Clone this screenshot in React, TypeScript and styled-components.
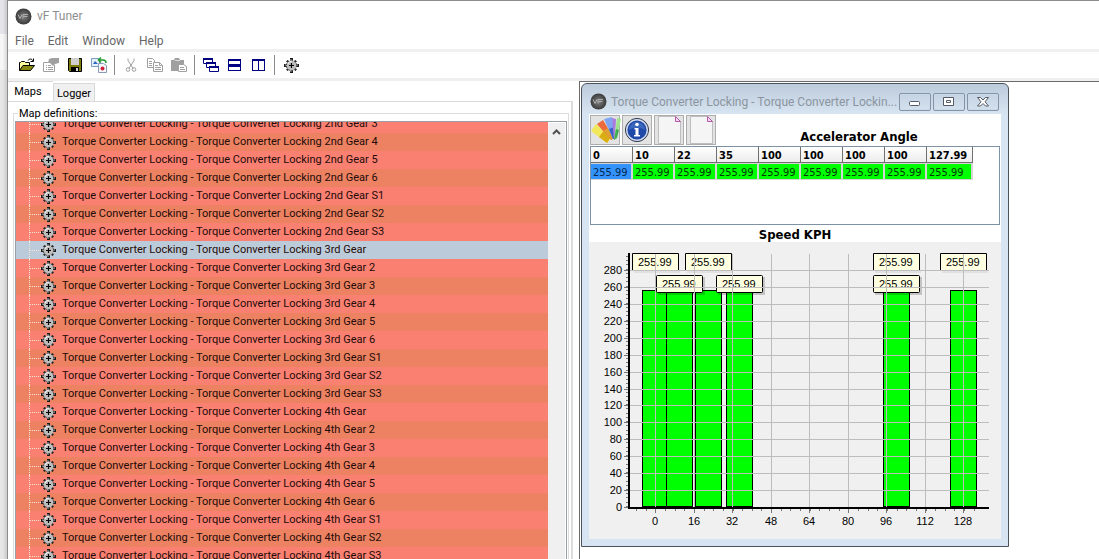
import React from "react";
import styled, { createGlobalStyle } from "styled-components";

const Global = createGlobalStyle`
  * { box-sizing: border-box; }
  body { margin: 0; background: #fff; font-family: Roboto, "Noto Sans", sans-serif; }
  button { font: inherit; color: inherit; padding: 0; margin: 0; border: 0; background: none; }
`;

const grid = `"DejaVu Sans Condensed", "DejaVu Sans", sans-serif`;

const Screen = styled.div`
  display: flex;
  height: 100vh;
  overflow: hidden;
`;
const Backdrop = styled.div`
  flex: none;
  width: 7px;
  background: linear-gradient(90deg, rgba(0, 0, 0, 0) 40%, rgba(0, 0, 0, 0.12)),
    linear-gradient(#e4e4ea 34px, #f6f6f6 34px, #f6f6f6 70px, #e6e6e6 70px);
`;
const AppWindow = styled.main`
  flex: 1;
  min-width: 0;
  display: flex;
  flex-direction: column;
  border-top: 1px solid #8c8c8e;
  border-left: 1px solid #8c8c8e;
  background: #fff;
`;
const TitleBar = styled.header`
  flex: none;
  display: flex;
  align-items: center;
  gap: 5px;
  height: 30px;
  padding-left: 7px;
`;
const AppTitle = styled.h1`
  margin: 0;
  font-size: 12px;
  line-height: 16px;
  font-weight: 400;
  color: #8e8e8e;
`;
const MenuBar = styled.nav`
  flex: none;
  display: flex;
  gap: 14px;
  height: 18px;
  padding: 2px 0 0 7px;
  font-size: 12px;
  line-height: 16px;
  color: #666;
`;
const ToolBar = styled.div`
  flex: none;
  display: flex;
  align-items: center;
  height: 32px;
  padding-left: 7px;
  border-top: 3px solid #f0f0f0;
  border-bottom: 3px solid #f0f0f0;
`;
const ToolButton = styled.button`
  display: grid;
  place-items: center;
  width: 24px;
  height: 24px;
`;
const Divider = styled.span`
  width: 8px;
  height: 20px;
  background: linear-gradient(#8a8a8a, #8a8a8a) 3px 0 / 1px 100% no-repeat;
`;
const Work = styled.div`
  flex: 1;
  min-height: 0;
  display: flex;
`;
const Side = styled.section`
  flex: 0 0 571px;
  display: flex;
  flex-direction: column;
  padding-right: 6px;
`;
const Tabs = styled.div`
  flex: none;
  display: flex;
  align-items: flex-end;
  height: 20px;
  font-size: 11px;
`;
const Tab = styled.button<{ $active?: boolean }>`
  height: ${(p) => (p.$active ? 20 : 18)}px;
  width: ${(p) => (p.$active ? 45 : 42)}px;
  padding: ${(p) => (p.$active ? "0 5px 0 0" : "1px 0 0")};
  text-align: center;
  background: ${(p) => (p.$active ? "#fff" : "#f0f0f0")};
  border: 1px solid #d9d9d9;
  border-bottom: 0;
  border-left-width: ${(p) => (p.$active ? 0 : 1)}px;
  border-right-width: ${(p) => (p.$active ? 0 : 1)}px;
`;
const TabPage = styled.div`
  flex: 1;
  min-height: 0;
  display: flex;
  padding: 4px 2px 0 5px;
  border-top: 1px solid #dcdcdc;
  border-right: 2px solid #dcdcdc;
`;
const Group = styled.fieldset`
  flex: 1;
  min-width: 0;
  margin: 0;
  padding: 0 1px;
  border: 1px solid #dcdcdc;
  border-bottom: 0;
  display: flex;
  flex-direction: column;
`;
const Legend = styled.legend`
  margin-left: 3px;
  padding: 0 1px;
  font-size: 11px;
  line-height: 15px;
`;
const ListBox = styled.div`
  height: 100%;
  display: flex;
  border: 1px solid #9a9fa6;
  border-bottom: 0;
  padding-top: 1px;
  overflow: hidden;
`;
const Tree = styled.ul`
  flex: 1;
  min-width: 0;
  margin: -8px 0 0;
  padding: 0;
  list-style: none;
`;
const Row = styled.li<{ $tone: string }>`
  display: flex;
  align-items: center;
  height: 18px;
  padding-left: 13px;
  background: ${(p) => p.$tone};
  font-size: 11px;
  line-height: 18px;
  color: #240b08;
  white-space: nowrap;
`;
const Branch = styled.span`
  flex: none;
  width: 12px;
  height: 18px;
  border-left: 1px dotted #f6e4da;
  background: repeating-linear-gradient(90deg, #f6e4da 0 1px, transparent 1px 2px) 0 9px / 100% 1px no-repeat;
`;
const RowLabel = styled.span`
  padding-left: 6px;
`;
const ScrollTrack = styled.div`
  flex: none;
  width: 18px;
  border-right: 1px solid #fff;
  background: #f0f0f0;
`;
const ScrollUp = styled.button`
  display: grid;
  place-items: center;
  width: 17px;
  height: 18px;
`;
const Desktop = styled.section`
  flex: 1;
  min-width: 0;
  border-top: 1px solid #6a6a6a;
  border-left: 1px solid #6a6a6a;
  padding: 1px;
`;
const Child = styled.article`
  width: 428px;
  display: flex;
  flex-direction: column;
  padding: 0 7px 7px;
  border: 1px solid #4c525a;
  border-radius: 6px 6px 0 0;
  background: linear-gradient(#bccbdc, #d7e4f1 30px, #d7e4f1);
`;
const ChildBar = styled.header`
  display: flex;
  align-items: center;
  height: 30px;
  padding: 5px 2px 0 1px;
`;
const ChildTitle = styled.h2`
  flex: 1;
  min-width: 0;
  margin: 0;
  padding-left: 4px;
  overflow: hidden;
  white-space: nowrap;
  font-size: 12px;
  line-height: 16px;
  font-weight: 400;
  color: #8b959f;
`;
const Controls = styled.div`
  display: flex;
  gap: 2px;
`;
const ControlButton = styled.button`
  display: grid;
  place-items: center;
  width: 32px;
  height: 18px;
  border: 1px solid #8495a8;
  border-radius: 2px;
  box-shadow: inset 0 0 0 1px #ccd9e6;
`;
const ChildBody = styled.div`
  background: #fff;
`;
const Strip = styled.div`
  display: flex;
  gap: 2px;
  height: 32px;
  padding: 1px 1px 0;
`;
const StripButton = styled.button`
  display: grid;
  place-items: center;
  width: 30px;
  height: 30px;
  background: #e3e3e3;
  border: 1px solid #adadad;
`;
const AxisTitle = styled.h3`
  flex: 1;
  margin: 0;
  text-align: center;
  font: bold 13px/14px ${grid};
`;
const TopTitle = styled(AxisTitle)`
  align-self: flex-end;
  padding-bottom: 2px;
`;
const LowerTitle = styled(AxisTitle)`
  padding-top: 3px;
`;
const TableBox = styled.div`
  height: 79px;
  margin: 0 1px;
  border: 1px solid #7f92a5;
`;
const DataTable = styled.table`
  border-collapse: separate;
  border-spacing: 0;
  table-layout: fixed;
  width: 382px;
  font: 11px/14px ${grid};
  th {
    height: 16px;
    padding: 2px 2px 0;
    text-align: left;
    border-right: 1px solid #707070;
    border-bottom: 1px solid #707070;
    background: linear-gradient(#fff, #ececec);
    line-height: 13px;
  }
`;
const Cell = styled.td<{ $picked?: boolean }>`
  height: 17px;
  padding: 2px 0 0 2px;
  line-height: 13px;
  color: ${(p) => (p.$picked ? "#052a52" : "#043a04")};
  background: ${(p) => (p.$picked ? "#3393fb" : "#00ff00")};
  border: solid #d4d4d4;
  border-width: 1px 2px 1px 0;
`;
const Plot = styled.svg`
  display: block;
  width: 100%;
  background: #f0f0f0;
  font: 11px "Liberation Sans", Arial, sans-serif;
`;

const Badge = () => (
  <svg width="17" height="17" viewBox="0 0 17 17" aria-hidden="true">
    <defs>
      <radialGradient id="ball" cx=".5" cy=".5" r=".5">
        <stop offset="0" stopColor="#858585" />
        <stop offset=".6" stopColor="#565656" />
        <stop offset="1" stopColor="#3a3a3a" />
      </radialGradient>
    </defs>
    <circle cx="8.500" cy="8.500" r="8" fill="url(#ball)" />
    <path d="M3 6.500l2 4 2-4M8 10.500v-4h5M8.500 8.500h4" stroke="#adadad" fill="none" />
  </svg>
);

const Gear = ({ size = 15 }: { size?: number }) => (
  <svg width={size} height={size} viewBox="0 0 15 15" aria-hidden="true">
    <path d="M7.500 0v15M0 7.500h15" stroke="#1a1a1a" strokeWidth="3" />
    <path d="M2.800 2.800l9.400 9.400M12.200 2.800L2.800 12.200" stroke="#1a1a1a" strokeWidth="2" />
    <path d="M7 1v13M1 7h13" stroke="#b8b8b8" />
    <circle cx="7.500" cy="7.500" r="5.200" fill="#bdbdbd" stroke="#2a2a2a" strokeDasharray="1.500 1.800" />
    <path d="M4 6l1.500-2 2.500-1" stroke="#f4f4f4" fill="none" />
    <path d="M7.500 5v5M5 7.500h5" stroke="#000" strokeWidth="1.200" />
  </svg>
);

const Glyph = ({ children }: { children: React.ReactNode }) => (
  <svg width="16" height="16" viewBox="0 0 16 16" fill="none" aria-hidden="true">
    {children}
  </svg>
);

const OpenIcon = () => (
  <Glyph>
    <path d="M.5 13.500v-8h1l1-1h3l1 1h4v3" fill="#ffff9c" stroke="#000" />
    <path d="M.5 13.500l3.500-5h11.500l-4 5z" fill="#8a8a10" stroke="#000" />
    <path d="M9 3.500c1-2 4-2 5 .5M14.500 1.500v3h-3" stroke="#000" />
  </Glyph>
);
const PropsIcon = () => (
  <Glyph>
    <path d="M6 2l3-1h7v5l-4 1-2 2-3-3h-2z" fill="#a0a0a0" />
    <path d="M6 5.500H.5v9h11V8M3 8.500h1M3 10.500h1M3 12.500h1M5 8.500h3M5 10.500h5M5 12.500h5" stroke="#a0a0a0" />
  </Glyph>
);
const SaveIcon = () => (
  <Glyph>
    <path d="M1.500 1.500h13v13h-12l-1-1z" fill="#7d7d0a" stroke="#000" />
    <path d="M4 1h8v7H4z" fill="#d0d0d0" />
    <path d="M4 10h8v5H4z" fill="#000" />
    <path d="M9 11h2v3H9z" fill="#d8d8d8" />
  </Glyph>
);
const TransferIcon = () => (
  <Glyph>
    <path d="M.5 1.500h8v8h-8z" fill="#e6f0fa" stroke="#7b9cc4" />
    <path d="M2 7l2-3 3 3z" fill="#2e67c0" />
    <path d="M7.500 6.500h5l3 2v7h-8z" fill="#f6f7fb" stroke="#8b99b8" />
    <circle cx="11.500" cy="11.500" r="2" fill="#d0203c" />
    <path d="M8 3h4c2 0 3 1 3 3M10 .5L7.500 3 10 5.500" stroke="#1f9a2b" strokeWidth="1.500" />
  </Glyph>
);
const CutIcon = () => (
  <Glyph>
    <path d="M5 1.500v2l5 8M11 1.500v2l-5 8" stroke="#a0a0a0" />
    <circle cx="5" cy="12.500" r="1.800" stroke="#a0a0a0" />
    <circle cx="11" cy="12.500" r="1.800" stroke="#a0a0a0" />
  </Glyph>
);
const CopyIcon = () => (
  <Glyph>
    <path d="M6 10.500H.5v-9h5l2 2V5M2 4.500h3M2 6.500h3M2 8.500h3" stroke="#a0a0a0" />
    <path d="M6.500 5.500h6l3 3v6h-9zM8 8.500h3M8 10.500h6M8 12.500h6M12.500 5.500v3h3" stroke="#a0a0a0" fill="#fff" />
  </Glyph>
);
const PasteIcon = () => (
  <Glyph>
    <path d="M0 3h3l1-2h4l1 2h4v11H0z" fill="#a0a0a0" />
    <path d="M4 3.500h5" stroke="#ddd" />
    <path d="M7.500 7.500h5l3 2v5h-8zM9 10.500h4M9 12.500h5" stroke="#a0a0a0" fill="#fff" />
  </Glyph>
);
const navy = "#000080";
const CascadeIcon = () => (
  <Glyph>
    {[[0, 1], [3, 5], [6, 9]].map(([x, y]) => (
      <g key={x}>
        <path d={`M${x + 0.5} ${y + 0.5}h9v5h-9z`} fill="#fff" stroke={navy} />
        <path d={`M${x} ${y}h10v2h-10z`} fill={navy} />
      </g>
    ))}
  </Glyph>
);
const RowsIcon = () => (
  <Glyph>
    <path d="M1 2h13v12H1z" fill={navy} />
    <path d="M2 4h11v3H2zM2 10h11v3H2z" fill="#fff" />
  </Glyph>
);
const ColsIcon = () => (
  <Glyph>
    <path d="M1 2h13v12H1z" fill={navy} />
    <path d="M2 4h5v9H2zM8 4h5v9H8z" fill="#fff" />
  </Glyph>
);

const PaletteIcon = () => (
  <svg width="30" height="28" viewBox="0 0 30 28" aria-hidden="true">
    <path d="M16 27L0 15l5-7 15 14z" fill="#f2e85c" />
    <path d="M16 27l-8-6 5-7 7 7z" fill="#d9ae13" />
    <path d="M20 24L6 8l6-4 11 18z" fill="#ec6a3c" />
    <path d="M20 24l-8-9 5-3 6 10z" fill="#e0a030" />
    <path d="M22 23L13 3l8-2 3 21z" fill="#7ea6f2" />
    <path d="M22 23l-4-10 5-2 1 12z" fill="#3a62c8" />
    <path d="M23 24L21 2l4 1-1 21z" fill="#a97be0" />
    <path d="M23 24l3-22 4 1-4 18z" fill="#9fe58b" />
    <path d="M23 24l2-11 3 1-2 8z" fill="#3fae52" />
  </svg>
);
const InfoIcon = () => (
  <svg width="26" height="26" viewBox="0 0 26 26" aria-hidden="true">
    <circle cx="13" cy="13" r="11.500" fill="#1e49a8" stroke="#30343c" />
    <circle cx="13" cy="13" r="10.300" fill="none" stroke="#d4dcec" strokeWidth="1.400" />
    <path d="M5 13a8 8 0 0 1 16 0c-5-3-11-3-16 0z" fill="#3a66bd" />
    <circle cx="13" cy="7.500" r="1.800" fill="#fff" />
    <path d="M10.500 11h4v7h1.500v1.500h-6V18h1.500v-5.500h-1z" fill="#fff" />
  </svg>
);
const PageIcon = () => (
  <svg width="26" height="28" viewBox="0 0 26 28" aria-hidden="true">
    <path d="M2.500.5H19l5.500 5.500v21.500h-22z" fill="#f5f5f6" stroke="#bdbdc0" />
    <path d="M19.500.5v5h5z" fill="#f3d8ef" stroke="#b45aa8" />
  </svg>
);

const gears: [string, string][] = [
  ["2nd", "3"], ["2nd", "4"], ["2nd", "5"], ["2nd", "6"], ["2nd", "S1"], ["2nd", "S2"], ["2nd", "S3"],
  ...["3rd", "4th"].flatMap((g) =>
    ["", "2", "3", "4", "5", "6", "S1", "S2", "S3"].map((n): [string, string] => [g, n])
  ),
];
const heads = ["0", "10", "22", "35", "100", "100", "100", "100", "127.99"];

const xs = [66, 105, 143, 182, 220, 259, 297, 336, 374];
const bars = [
  { x: 53, w: 24 }, { x: 77, w: 26 }, { x: 106, w: 26 }, { x: 137, w: 26 }, { x: 294, w: 26 }, { x: 361, w: 26 },
];
const upperTags = [43, 96, 284, 351];
const lowerTags = [67, 127, 284];
const yOf = (v: number) => Math.round(265 - (v * 237) / 280);
const levels = Array.from({ length: 15 }, (_, i) => i * 20);

const Chart = () => (
  <Plot viewBox="0 0 412 297" role="img" aria-label="Bar chart">
    {bars.map((b) => (
      <rect key={b.x} x={b.x + 0.5} y="48.500" width={b.w} height="216" fill="#00ff00" stroke="#000" />
    ))}
    {upperTags.map((x) => (
      <g key={x}>
        <path d={`M${x + 2} 28h46v3h-46z`} fill="#000" opacity=".06" />
        <path d={`M${x} 11h47v17h-47z`} fill="#ffffe1" />
        <path d={`M${x + 0.5} 28v-16.500h46v16.500`} fill="none" stroke="#000" />
        <text x={x + 6} y="24">255.99</text>
      </g>
    ))}
    {lowerTags.map((x) => (
      <g key={x}>
        <rect x={x + 2} y="35" width="47" height="18" fill="#000" opacity=".18" />
        <rect x={x + 0.5} y="33.500" width="46" height="17" rx="1" fill="#ffffe1" stroke="#000" />
        <text x={x + 6} y="46">255.99</text>
      </g>
    ))}
    <g stroke="#bdbdbd" shapeRendering="crispEdges">
      {xs.map((x) => <path key={x} d={`M${x + 0.5} 12V265`} />)}
      {levels.slice(1).map((v) => <path key={v} d={`M41 ${yOf(v) + 0.5}H400`} />)}
    </g>
    <g stroke="#777" shapeRendering="crispEdges">
      {levels.map((v) => <path key={v} d={`M35 ${yOf(v) + 0.5}h4`} />)}
      {Array.from({ length: 60 }, (_, i) => <path key={i} d={`M37 ${14.5 + i * 4.236}h2`} />)}
      {xs.map((x) => <path key={x} d={`M${x + 0.5} 267v4`} />)}
      {Array.from({ length: 36 }, (_, i) => <path key={i} d={`M${47.5 + i * 9.65} 267v2`} />)}
    </g>
    <path d="M40 11V267M39 266H400" stroke="#000" strokeWidth="2" />
    {levels.map((v) => (
      <text key={v} x="33" y={yOf(v) + 4} textAnchor="end">{v}</text>
    ))}
    {xs.map((x, i) => (
      <text key={x} x={x} y="283" textAnchor="middle">{i * 16}</text>
    ))}
  </Plot>
);

export default function App() {
  return (
    <Screen>
      <Global />
      <Backdrop />
      <AppWindow>
        <TitleBar>
          <Badge />
          <AppTitle>vF Tuner</AppTitle>
        </TitleBar>
        <MenuBar>
          {["File", "Edit", "Window", "Help"].map((m) => <button key={m}>{m}</button>)}
        </MenuBar>
        <ToolBar>
          <ToolButton aria-label="Open"><OpenIcon /></ToolButton>
          <ToolButton aria-label="Properties"><PropsIcon /></ToolButton>
          <ToolButton aria-label="Save"><SaveIcon /></ToolButton>
          <ToolButton aria-label="Transfer"><TransferIcon /></ToolButton>
          <Divider />
          <ToolButton aria-label="Cut"><CutIcon /></ToolButton>
          <ToolButton aria-label="Copy"><CopyIcon /></ToolButton>
          <ToolButton aria-label="Paste"><PasteIcon /></ToolButton>
          <Divider />
          <ToolButton aria-label="Cascade"><CascadeIcon /></ToolButton>
          <ToolButton aria-label="Tile rows"><RowsIcon /></ToolButton>
          <ToolButton aria-label="Tile columns"><ColsIcon /></ToolButton>
          <Divider />
          <ToolButton aria-label="Settings"><Gear /></ToolButton>
        </ToolBar>
        <Work>
          <Side>
            <Tabs role="tablist">
              <Tab role="tab" aria-selected $active>Maps</Tab>
              <Tab role="tab" aria-selected={false}>Logger</Tab>
            </Tabs>
            <TabPage>
              <Group>
                <Legend>Map definitions:</Legend>
                <ListBox>
                  <Tree>
                    {gears.map(([g, n], i) => (
                      <Row key={g + n} $tone={g === "3rd" && !n ? "#bccbd9" : i % 2 ? "#ec8262" : "#fa8072"}>
                        <Branch />
                        <Gear />
                        <RowLabel>
                          {`Torque Converter Locking - Torque Converter Locking ${g} Gear ${n}`.trim()}
                        </RowLabel>
                      </Row>
                    ))}
                  </Tree>
                  <ScrollTrack>
                    <ScrollUp aria-label="Scroll up">
                      <svg width="9" height="6" viewBox="0 0 9 6" aria-hidden="true">
                        <path d="M1 5l3.500-3.500L8 5" fill="none" stroke="#505050" strokeWidth="2" />
                      </svg>
                    </ScrollUp>
                  </ScrollTrack>
                </ListBox>
              </Group>
            </TabPage>
          </Side>
          <Desktop>
            <Child>
              <ChildBar>
                <Badge />
                <ChildTitle>Torque Converter Locking - Torque Converter Lockin...</ChildTitle>
                <Controls>
                  <ControlButton aria-label="Minimize">
                    <svg width="12" height="10" viewBox="0 0 12 10"><rect x=".5" y="4.500" width="10" height="4" rx="1" fill="#fff" stroke="#555b64" /></svg>
                  </ControlButton>
                  <ControlButton aria-label="Maximize">
                    <svg width="12" height="10" viewBox="0 0 12 10"><path d="M.5.5h10v8H.5zM3.500 3.500h4v2h-4z" fill="#fff" stroke="#555b64" /></svg>
                  </ControlButton>
                  <ControlButton aria-label="Close">
                    <svg width="12" height="10" viewBox="0 0 12 10"><path d="M.5.5h3L6 3 8.500.5h3L8 4.800l3.500 4.200h-3L6 6.500 3.500 9h-3L4 4.800z" fill="#fff" stroke="#555b64" /></svg>
                  </ControlButton>
                </Controls>
              </ChildBar>
              <ChildBody>
                <Strip>
                  <StripButton aria-label="Colours"><PaletteIcon /></StripButton>
                  <StripButton aria-label="Info"><InfoIcon /></StripButton>
                  <StripButton aria-label="New page"><PageIcon /></StripButton>
                  <StripButton aria-label="Copy page"><PageIcon /></StripButton>
                  <TopTitle>Accelerator Angle</TopTitle>
                </Strip>
                <TableBox>
                  <DataTable>
                    <colgroup>
                      {heads.map((_, i) => <col key={i} width={i === 8 ? 46 : 42} />)}
                    </colgroup>
                    <thead>
                      <tr>{heads.map((h, i) => <th key={i} scope="col">{h}</th>)}</tr>
                    </thead>
                    <tbody>
                      <tr>{heads.map((_, i) => <Cell key={i} $picked={i === 0}>255.99</Cell>)}</tr>
                    </tbody>
                  </DataTable>
                </TableBox>
                <LowerTitle>Speed KPH</LowerTitle>
                <Chart />
              </ChildBody>
            </Child>
          </Desktop>
        </Work>
      </AppWindow>
    </Screen>
  );
}
